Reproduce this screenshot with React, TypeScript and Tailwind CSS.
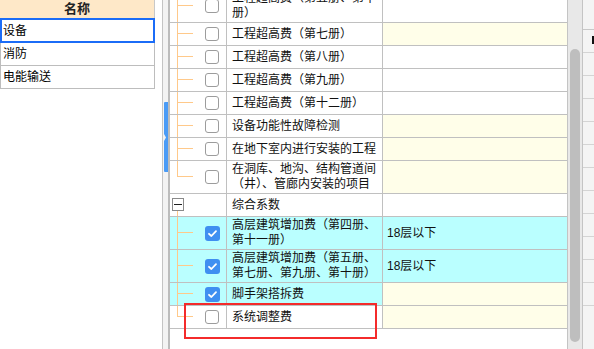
import React from "react";

type Row = {
  lines: string[];
  val?: string;
  valBg: string;
  rowBg?: string;
  checked?: boolean;
  last?: boolean;
  group?: boolean;
};

const ORANGE = "#ffc98a";

const rows: Row[] = [
  { lines: ["工程超高费（第五册、第十", "册）"], valBg: "bg-white" },
  { lines: ["工程超高费（第七册）"], valBg: "bg-[#fffee9]" },
  { lines: ["工程超高费（第八册）"], valBg: "bg-white" },
  { lines: ["工程超高费（第九册）"], valBg: "bg-white" },
  { lines: ["工程超高费（第十二册）"], valBg: "bg-white" },
  { lines: ["设备功能性故障检测"], valBg: "bg-[#fffee9]" },
  { lines: ["在地下室内进行安装的工程"], valBg: "bg-[#fffee9]" },
  { lines: ["在洞库、地沟、结构管道间", "（井）、管廊内安装的项目"], valBg: "bg-[#fffee9]", last: true },
  { lines: ["综合系数"], valBg: "bg-white", group: true },
  { lines: ["高层建筑增加费（第四册、", "第十一册）"], val: "18层以下", valBg: "bg-[#baffff]", rowBg: "bg-[#baffff]", checked: true },
  { lines: ["高层建筑增加费（第五册、", "第七册、第九册、第十册）"], val: "18层以下", valBg: "bg-[#baffff]", rowBg: "bg-[#baffff]", checked: true },
  { lines: ["脚手架搭拆费"], valBg: "bg-[#fffee9]", rowBg: "bg-[#baffff]", checked: true },
  { lines: ["系统调整费"], valBg: "bg-[#fffee9]", last: true },
];

function Check({ checked }: { checked?: boolean }) {
  if (checked) {
    return (
      <div className="w-[15px] h-[15px] rounded-[3px] bg-[#3f8ff1] flex items-center justify-center shrink-0">
        <svg width="11" height="11" viewBox="0 0 11 11">
          <path d="M2 5.8 L4.4 8 L9 3.2" stroke="white" strokeWidth="1.8" fill="none" strokeLinecap="round" strokeLinejoin="round" />
        </svg>
      </div>
    );
  }
  return <div className="w-[14px] h-[14px] rounded-[3px] border border-[#9c9c9c] bg-white shrink-0" />;
}

function Conn({ h, last }: { h: number; last?: boolean }) {
  const mid = h === 22 ? 10.5 : 15.5;
  return (
    <svg width="24" height={h} className="shrink-0 block">
      <line x1="7.5" y1="0" x2="7.5" y2={last ? mid : h} stroke={ORANGE} strokeWidth="1" />
      <line x1="7" y1={mid} x2="23" y2={mid} stroke={ORANGE} strokeWidth="1" />
    </svg>
  );
}

function GridRow({ r, first }: { r: Row; first?: boolean }) {
  const two = r.lines.length > 1;
  const h = two ? 32 : 22;
  const rowBg = r.rowBg ?? "bg-white";
  return (
    <div className={`flex border-b border-[#c0c0c0] shrink-0 ${two ? "h-[33px]" : "h-[23px]"} ${first ? "mt-[-10px]" : ""}`}>
      <div className={`w-[57px] shrink-0 border-r border-[#c0c0c0] flex items-stretch ${rowBg}`}>
        {r.group ? (
          <div className="flex flex-col items-center w-[13px] ml-[1px] pt-[4px]">
            <div className="w-[12px] h-[13px] border border-[#8a8a8a] bg-white flex items-center justify-center shrink-0">
              <div className="w-[8px] h-[1px] bg-[#202020]" />
            </div>
            <div className="flex-1 w-px bg-[#ffc98a]" />
          </div>
        ) : (
          <>
            <Conn h={h} last={r.last} />
            <div className="flex items-center ml-[11px]">
              <Check checked={r.checked} />
            </div>
          </>
        )}
      </div>
      <div className={`w-[156px] shrink-0 border-r border-[#c0c0c0] pl-[5px] flex flex-col justify-center ${rowBg}`}>
        {r.lines.map((l, i) => (
          <div key={i} className="leading-[15px] whitespace-nowrap text-[12px] text-[#111]">
            {l}
          </div>
        ))}
      </div>
      <div className={`flex-1 pl-[4px] flex items-center text-[12px] text-[#111] ${r.valBg}`}>{r.val ?? ""}</div>
    </div>
  );
}

export default function App() {
  return (
    <div className="relative w-[594px] h-[349px] overflow-hidden bg-white flex font-['Liberation_Sans','Noto_Sans_CJK_SC',sans-serif] text-[12px] text-black">
      {/* left panel */}
      <div className="w-[155px] shrink-0 flex flex-col">
        <div className="h-[18px] bg-[#fee8c8] border-r border-[#c8c8c8] flex items-center justify-center font-bold text-[13px] text-[#222]">
          名称
        </div>
        <div className="h-[25px] border-2 border-[#1b6cf7] flex items-center pl-[1px] text-[12px]">设备</div>
        <div className="h-[23px] border-x border-b border-[#bdbdbd] flex items-center pl-[2px] text-[12px]">消防</div>
        <div className="h-[23px] border-x border-b border-[#bdbdbd] flex items-center pl-[2px] text-[12px]">电能输送</div>
      </div>
      <div className="w-[7px] shrink-0" />
      {/* splitter */}
      <div className="w-[6px] shrink-0 border-l border-[#c4c4c4] bg-[#f3f3f3] flex flex-col pt-[102px] pl-[1px]">
        <svg width="4" height="70" viewBox="0 0 4 70" className="block">
          <path d="M0 1 Q0 0 1 0 H4 V70 H1 Q0 70 0 69 V39 L2 35.5 L0 32 Z" fill="#4a9bf6" />
        </svg>
      </div>
      {/* grid */}
      <div className="w-[399px] shrink-0 border-l-2 border-[#bcbcbc] flex flex-col overflow-hidden">
        {rows.map((r, i) => (
          <GridRow key={i} r={r} first={i === 0} />
        ))}
        <div className="flex-1 bg-white" />
      </div>
      {/* scrollbar */}
      <div className="w-[16px] shrink-0 border-x border-[#c4c4c4] bg-[#e8e8e8] flex flex-col items-center">
        <div className="mt-[49px] w-[10px] h-[293px] rounded-full bg-[#bebebe]" />
      </div>
      {/* right strip */}
      <div className="flex-1 bg-[#f4f4f4] flex flex-col">
        <div className="h-[29px] shrink-0" />
        <div className="h-[23px] border-t border-[#c8c8c8] flex justify-end items-start pt-[6px]">
          <div className="w-[2px] h-[8px] bg-[#111]" />
        </div>
        {Array.from({ length: 12 }).map((_, i) => (
          <div key={i} className="h-[23px] shrink-0 border-t border-[#d4d4d4]" />
        ))}
      </div>
      {/* red highlight box */}
      <div className="absolute left-[184px] top-[303px] w-[193px] h-[36px] border-2 border-[#f42b2b] pointer-events-none" />
    </div>
  );
}
